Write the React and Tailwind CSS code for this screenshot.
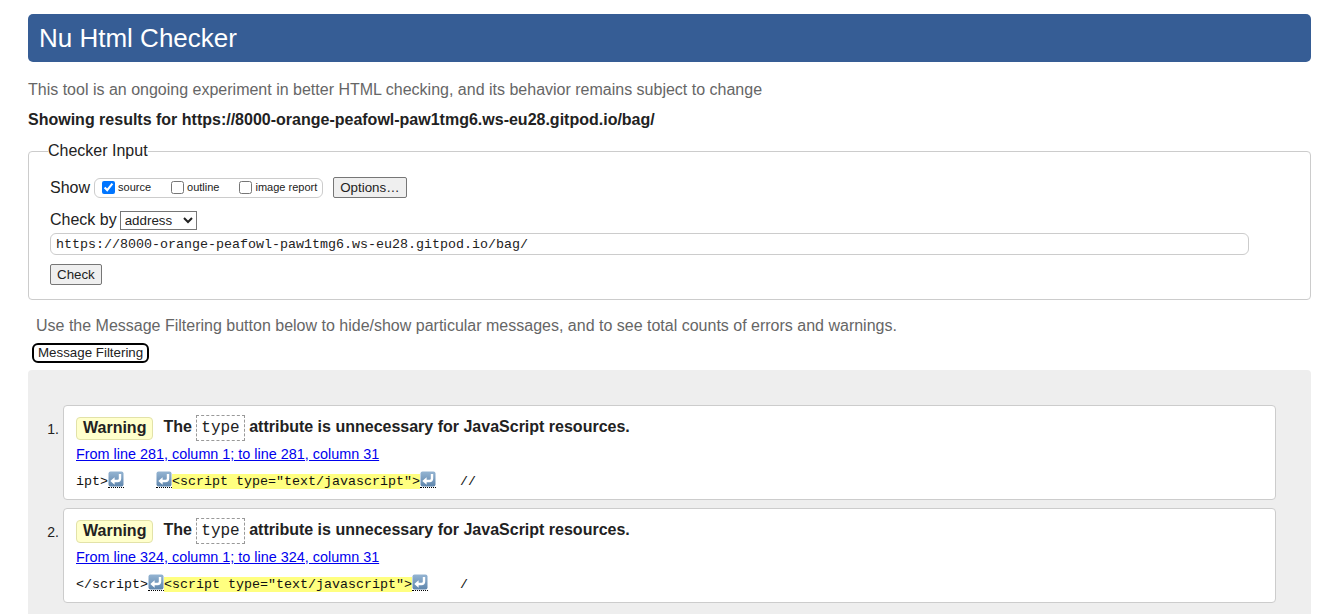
const RETURN = () => (
  <span className="inline-block align-[-3px] border-b border-dotted border-black leading-none">
    <svg width="16" height="16" viewBox="0 0 16 16" className="block">
      <defs>
        <linearGradient id="rg" x1="0" y1="0" x2="0" y2="1">
          <stop offset="0" stopColor="#94b4d2" />
          <stop offset="1" stopColor="#5f86ad" />
        </linearGradient>
      </defs>
      <rect x="0.5" y="0.5" width="15" height="15" rx="2" fill="url(#rg)" />
      <path d="M12 3 V7.5 a2.5 2.5 0 0 1 -2.5 2.5 H6" fill="none" stroke="#fff" strokeWidth="2.4" />
      <path d="M2.3 10 L6.6 6.3 L6.6 13.7 Z" fill="#fff" />
    </svg>
  </span>
);

const MESSAGES = [
  {
    n: 1,
    loc: "From line 281, column 1; to line 281, column 31",
    before: ["ipt>", "ret", "    ", "ret"],
    after: ["ret", "   //"],
  },
  {
    n: 2,
    loc: "From line 324, column 1; to line 324, column 31",
    before: ["</script>", "ret"],
    after: ["ret", "    /"],
  },
];

function Extract({ before, after }) {
  const part = (p, i) =>
    p === "ret" ? <RETURN key={i} /> : <span key={i}>{p}</span>;
  return (
    <div className="mt-[9px] whitespace-pre font-['Liberation_Mono',monospace] text-[13.33px] leading-[16px] text-[#111]">
      {before.map(part)}
      <span className="bg-[#ffff80]">{'<script type="text/javascript">'}</span>
      {after.map(part)}
    </div>
  );
}

function Message({ msg }) {
  return (
    <div className="flex">
      <div className="w-[35px] shrink-0 pr-[4px] pt-[16px] text-right text-[14px] leading-[16px]">
        {msg.n}.
      </div>
      <div className="w-[1214px] rounded-[4px] border border-[#cccccc] bg-white pl-[12px] pt-[9px] pb-[9px]">
        <div className="flex items-center h-[26px] text-[16px] font-bold">
          <span className="flex h-[23px] items-center rounded-[4px] border border-[#e2e2a8] bg-[#ffffcc] px-[6px]">
            Warning
          </span>
          <span className="ml-[10px] whitespace-pre">
            The{" "}
            <code className="inline-block border border-dashed border-[#999] px-[4px] py-[3px] align-middle font-['Liberation_Mono',monospace] text-[16px] font-normal leading-[18px]">
              type
            </code>{" "}
            attribute is unnecessary for JavaScript resources.
          </span>
        </div>
        <a href="#" className="mt-[6px] block w-max text-[14.4px] leading-[15px] text-[#0000ee] underline">
          {msg.loc}
        </a>
        <Extract before={msg.before} after={msg.after} />
      </div>
    </div>
  );
}

export default function App() {
  return (
    <div className="min-h-screen bg-white px-[28px] pt-[14px] font-['Liberation_Sans',Arial,sans-serif] text-[#222]">
      <div className="flex h-[48px] items-center rounded-[5px] bg-[#365d95] pl-[11px] text-[26px] text-white">
        Nu Html Checker
      </div>
      <p className="mt-[19px] text-[16px] leading-[18px] text-[#666]">
        This tool is an ongoing experiment in better HTML checking, and its behavior remains subject to change
      </p>
      <p className="mt-[12px] text-[16px] font-bold leading-[18px]">
        Showing results for https://8000-orange-peafowl-paw1tmg6.ws-eu28.gitpod.io/bag/
      </p>

      <fieldset className="mt-[13px] rounded-[4px] border border-[#cccccc] px-[21px] pt-[17px] pb-[14px]">
        <legend className="-ml-[2px] p-0 text-[16px] leading-[18px]">Checker Input</legend>
        <div className="flex h-[21px] items-center">
          <span className="text-[16px] leading-[18px]">Show</span>
          <div className="ml-[4px] flex h-[20px] items-center rounded-[6px] border border-[#cccccc] pl-[3px] pr-[5px] text-[11px]">
            <input type="checkbox" defaultChecked className="m-[3px] ml-[4px] h-[13px] w-[13px]" />
            <span>source</span>
            <input type="checkbox" className="m-[3px] ml-[20px] h-[13px] w-[13px]" />
            <span>outline</span>
            <input type="checkbox" className="m-[3px] ml-[20px] h-[13px] w-[13px]" />
            <span>image report</span>
          </div>
          <button className="ml-[10px] h-[21px] rounded-[2px] border border-[#767676] bg-[#efefef] px-[6px] text-[13.33px]">
            Options…
          </button>
        </div>
        <div className="mt-[12px] flex h-[20px] items-center">
          <span className="text-[16px] leading-[18px]">Check by</span>
          <select className="ml-[3px] h-[19px] w-[77px] border border-[#767676] bg-white text-[13.33px]">
            <option>address</option>
          </select>
        </div>
        <input
          readOnly
          value="https://8000-orange-peafowl-paw1tmg6.ws-eu28.gitpod.io/bag/"
          className="mt-[3px] block h-[22px] w-[1199px] rounded-[6px] border border-[#cccccc] px-[5px] font-['Liberation_Mono',monospace] text-[13.33px]"
        />
        <button className="mt-[9px] block h-[21px] rounded-[2px] border border-[#767676] bg-[#efefef] px-[6px] text-[13.33px]">
          Check
        </button>
      </fieldset>

      <p className="mt-[17px] ml-[8px] text-[16px] leading-[18px] text-[#666]">
        Use the Message Filtering button below to hide/show particular messages, and to see total counts of errors and warnings.
      </p>
      <button className="mt-[8px] ml-[4px] block h-[20px] rounded-[6px] border-2 border-black bg-white px-[4px] text-[13.33px] leading-[14px]">
        Message Filtering
      </button>

      <div className="mt-[7px] flex flex-col gap-[8px] rounded-t-[4px] bg-[#eeeeee] pt-[35px] pr-[35px] pb-[20px]">
        {MESSAGES.map((m) => (
          <Message key={m.n} msg={m} />
        ))}
      </div>
    </div>
  );
}
